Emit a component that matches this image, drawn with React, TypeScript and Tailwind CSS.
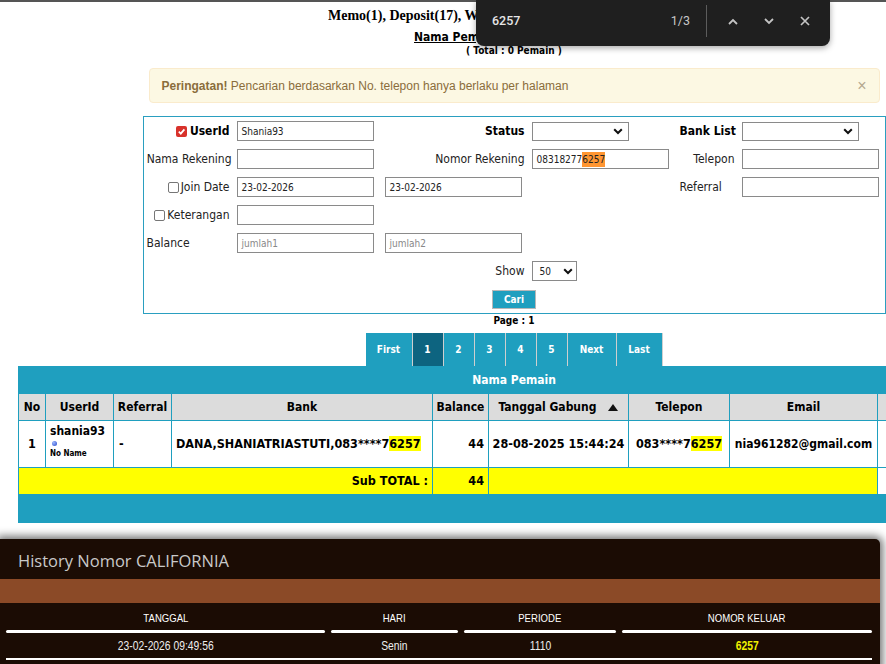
import React from "react";

const ui = "font-['Tahoma','DejaVu_Sans_Condensed','DejaVu_Sans',sans-serif]";
const narrow = "font-['Liberation_Sans',sans-serif]";

function Check({ on }: { on?: boolean }) {
  if (on) {
    return (
      <span className="inline-flex h-[11px] w-[11px] items-center justify-center rounded-[2px] bg-[#d8322b]">
        <svg viewBox="0 0 10 10" className="h-[9px] w-[9px]">
          <path d="M2 5.2 4.2 7.4 8.2 2.6" fill="none" stroke="#fff" strokeWidth="1.9" />
        </svg>
      </span>
    );
  }
  return <span className="inline-block h-[11px] w-[11px] rounded-[2px] border border-[#767676] bg-white" />;
}

function Chevron() {
  return (
    <svg viewBox="0 0 10 7" className="h-[7px] w-[10px]">
      <polyline points="1.2,1.2 5,5 8.8,1.2" fill="none" stroke="#111" strokeWidth="2" />
    </svg>
  );
}

function Field({ className, children }: { className: string; children?: React.ReactNode }) {
  return (
    <div className={"flex h-[20px] items-center border border-[#8a8a8a] bg-white px-[4px] text-[10px] text-[#222] " + className}>
      {children}
    </div>
  );
}

function Select({ className, value }: { className: string; value?: string }) {
  return (
    <div className={"flex h-[19px] items-center justify-between border border-[#8a8a8a] bg-white pl-[10px] pr-[5px] text-[10px] text-[#222] " + className}>
      <span>{value}</span>
      <Chevron />
    </div>
  );
}

const hl = "bg-[#ffff00]";

export default function App() {
  return (
    <div className={"relative h-[664px] w-[886px] overflow-hidden bg-white " + ui}>
      <div className="w-[1028px]">
        <div className="h-[2px] bg-[#555]" />
        <div className="pl-[328px] pt-[6px] font-['Liberation_Serif',serif] text-[14px] leading-[16px] font-bold text-black">
          <div className="w-[148px] overflow-hidden whitespace-nowrap">Memo(1), Deposit(17), Withdraw(4)</div>
        </div>
        <div className="mt-[6px] pl-[414px] text-[12px] leading-[14px] font-bold text-black underline">
          <div className="w-[62px] overflow-hidden whitespace-nowrap">Nama Pemain</div>
        </div>
        <div className="text-center text-[10px] leading-[13px] font-bold text-black">( Total : 0 Pemain )</div>

        <div className="mx-auto mt-[11px] flex h-[35px] w-[731px] items-center justify-between rounded-[4px] border border-[#faebcc] bg-[#fcf8e3] pl-[12px] pr-[12px] font-['Liberation_Sans',sans-serif] text-[12px] text-[#8a6d3b]">
          <span>
            <b>Peringatan!</b> Pencarian berdasarkan No. telepon hanya berlaku per halaman
          </span>
          <span className="text-[16px] leading-none text-[#b4a88f]">×</span>
        </div>

        <div className="mx-auto mt-[13px] w-[743px] border border-[#2a9fc0] text-[12px] text-[#222]">
          <div className="grid grid-cols-[89px_147px_148px_148px_62px_147px] grid-rows-[repeat(6,28px)] items-center">
            <div className="flex items-center justify-end gap-[3px] pr-[3px] font-bold text-[12px] text-black">
              <Check on />
              <span>UserId</span>
            </div>
            <div className="pl-[4px]"><Field className="w-[137px]">Shania93</Field></div>
            <div className="pr-[3px] text-right font-bold text-[12px] text-black">Status</div>
            <div className="pl-[4px]"><Select className="w-[97px]" /></div>
            <div className="pl-[4px] font-bold text-[12px] text-black">Bank List</div>
            <div className="pl-[4px]"><Select className="w-[117px]" /></div>

            <div className="pr-[1px] text-right">Nama Rekening</div>
            <div className="pl-[4px]"><Field className="w-[137px]" /></div>
            <div className="pr-[3px] text-right">Nomor Rekening</div>
            <div className="pl-[4px]">
              <Field className="w-[137px]">
                08318277<span className="bg-[#ff9632]">6257</span>
              </Field>
            </div>
            <div className="pr-[3px] text-right">Telepon</div>
            <div className="pl-[4px]"><Field className="w-[137px]" /></div>

            <div className="flex items-center justify-end gap-[2px] pr-[3px]">
              <Check />
              <span>Join Date</span>
            </div>
            <div className="pl-[4px]"><Field className="w-[137px]">23-02-2026</Field></div>
            <div className="pl-[5px]"><Field className="w-[137px]">23-02-2026</Field></div>
            <div />
            <div className="pl-[4px]">Referral</div>
            <div className="pl-[4px]"><Field className="w-[137px]" /></div>

            <div className="flex items-center justify-end gap-[2px] pr-[3px]">
              <Check />
              <span>Keterangan</span>
            </div>
            <div className="pl-[4px]"><Field className="w-[137px]" /></div>
            <div />
            <div />
            <div />
            <div />

            <div className="pl-[3px]">Balance</div>
            <div className="pl-[4px]"><Field className="w-[137px] text-[#888]">jumlah1</Field></div>
            <div className="pl-[5px]"><Field className="w-[137px] text-[#888]">jumlah2</Field></div>
            <div />
            <div />
            <div />

            <div />
            <div />
            <div className="pr-[3px] text-right">Show</div>
            <div className="pl-[4px]">
              <div className="flex h-[20px] w-[45px] items-center justify-between border border-[#8a8a8a] bg-white pl-[7px] pr-[3px] text-[10px]">
                <span>50</span>
                <Chevron />
              </div>
            </div>
            <div />
            <div />
          </div>
          <div className="flex h-[28px] items-center justify-center">
            <button className="h-[19px] w-[44px] border border-[#b8b8b8] bg-[#1f9fbf] text-[10px] font-bold text-white">
              Cari
            </button>
          </div>
        </div>

        <div className="text-center text-[10px] leading-[13px] font-bold text-black">Page : 1</div>

        <div className="mt-[6px] flex justify-center">
          <div className="flex h-[33px] text-[10px] font-bold text-white">
            <div className="flex w-[47px] items-center justify-center border-r border-[#cfcfcf] bg-[#1f9fbf]">First</div>
            <div className="flex w-[31px] items-center justify-center border-r border-[#cfcfcf] bg-[#0d6480]">1</div>
            <div className="flex w-[31px] items-center justify-center border-r border-[#cfcfcf] bg-[#1f9fbf]">2</div>
            <div className="flex w-[31px] items-center justify-center border-r border-[#cfcfcf] bg-[#1f9fbf]">3</div>
            <div className="flex w-[31px] items-center justify-center border-r border-[#cfcfcf] bg-[#1f9fbf]">4</div>
            <div className="flex w-[31px] items-center justify-center border-r border-[#cfcfcf] bg-[#1f9fbf]">5</div>
            <div className="flex w-[49px] items-center justify-center border-r border-[#cfcfcf] bg-[#1f9fbf]">Next</div>
            <div className="flex w-[46px] items-center justify-center border-r border-[#cfcfcf] bg-[#1f9fbf]">Last</div>
          </div>
        </div>

        <table className="ml-[18px] w-[992px] table-fixed border-separate border-spacing-[1px] bg-[#1f9fbf] text-[12px] font-bold text-black">
          <colgroup>
            <col className="w-[26px]" />
            <col className="w-[67px]" />
            <col className="w-[57px]" />
            <col className="w-[260px]" />
            <col className="w-[55px]" />
            <col className="w-[139px]" />
            <col className="w-[100px]" />
            <col className="w-[147px]" />
            <col className="w-[131px]" />
          </colgroup>
          <tbody>
            <tr className="h-[26px]">
              <td colSpan={9} className="p-0 text-center text-[12px] text-white">Nama Pemain</td>
            </tr>
            <tr className="h-[26px] bg-[#dcdcdc] text-center">
              <td className="p-0">No</td>
              <td className="p-0">UserId</td>
              <td className="p-0">Referral</td>
              <td className="p-0">Bank</td>
              <td className="p-0">Balance</td>
              <td className="p-0">
                <span>Tanggal Gabung</span>
                <span className="ml-[12px] inline-block align-middle">
                  <svg viewBox="0 0 10 7" className="h-[7px] w-[10px]">
                    <polygon points="0,7 5,0 10,7" fill="#111" />
                  </svg>
                </span>
              </td>
              <td className="p-0">Telepon</td>
              <td className="p-0">Email</td>
              <td className="p-0"></td>
            </tr>
            <tr className="h-[46px] bg-white text-[12.5px]">
              <td className="p-0 text-center">1</td>
              <td className="p-0 pl-[4px] align-top">
                <div className="pt-[3px] text-[12px] leading-[14px]">shania93</div>
                <div className="ml-[2px] mt-[3px] h-[5px] w-[5px] rounded-full bg-[radial-gradient(circle_at_35%_35%,#9db8ff,#2546c8)]" />
                <div className="mt-[3px] text-[8px] leading-[10px]">No Name</div>
              </td>
              <td className="p-0 pl-[5px]">-</td>
              <td className="p-0 pl-[4px]">
                DANA,SHANIATRIASTUTI,083****7<span className={hl}>6257</span>
              </td>
              <td className="p-0 pr-[4px] text-right">44</td>
              <td className="p-0 text-center">28-08-2025 15:44:24</td>
              <td className="p-0 text-center">
                083****7<span className={hl}>6257</span>
              </td>
              <td className="p-0 text-center text-[12px]">nia961282@gmail.com</td>
              <td className="p-0"></td>
            </tr>
            <tr className="h-[26px] text-[12.5px]">
              <td colSpan={4} className="bg-[#ffff00] p-0 pr-[4px] text-right">Sub TOTAL :</td>
              <td className="bg-[#ffff00] p-0 pr-[4px] text-right">44</td>
              <td colSpan={3} className="bg-[#ffff00] p-0"></td>
              <td className="bg-white p-0"></td>
            </tr>
            <tr className="h-[27px]">
              <td colSpan={9} className="p-0"></td>
            </tr>
          </tbody>
        </table>
      </div>

      <div className="mt-[16px] w-[880px] rounded-tr-[5px] bg-[#1b0c04] shadow-[0_0_9px_3px_rgba(0,0,0,0.55)]">
        <div className="pl-[18px] pt-[11px] font-['Open_Sans',sans-serif] text-[16.5px] leading-[22px] text-[#c9c9c9]">
          History Nomor CALIFORNIA
        </div>
        <div className="mt-[7px] h-[24px] bg-[#8b4a27]" />
        <div className={"grid grid-cols-[319px_127px_152px_250px] gap-x-[6px] pl-[6px] " + narrow}>
          <div className="flex h-[27px] items-end justify-center pb-[4px] text-[11px] text-white">
            <span className="inline-block scale-x-[0.87]">TANGGAL</span>
          </div>
          <div className="flex h-[27px] items-end justify-center pb-[4px] text-[11px] text-white">
            <span className="inline-block scale-x-[0.87]">HARI</span>
          </div>
          <div className="flex h-[27px] items-end justify-center pb-[4px] text-[11px] text-white">
            <span className="inline-block scale-x-[0.87]">PERIODE</span>
          </div>
          <div className="flex h-[27px] items-end justify-center pb-[4px] text-[11px] text-white">
            <span className="inline-block scale-x-[0.87]">NOMOR KELUAR</span>
          </div>
          <div className="h-[3px] rounded-full bg-white" />
          <div className="h-[3px] rounded-full bg-white" />
          <div className="h-[3px] rounded-full bg-white" />
          <div className="h-[3px] rounded-full bg-white" />
          <div className="flex h-[25px] items-center justify-center text-[12px] text-[#eee]">
            <span className="inline-block scale-x-[0.86]">23-02-2026 09:49:56</span>
          </div>
          <div className="flex h-[25px] items-center justify-center text-[12px] text-[#eee]">
            <span className="inline-block scale-x-[0.86]">Senin</span>
          </div>
          <div className="flex h-[25px] items-center justify-center text-[12px] text-[#eee]">
            <span className="inline-block scale-x-[0.86]">1110</span>
          </div>
          <div className="flex h-[25px] items-center justify-center text-[12px] font-bold text-[#f2f200]">
            <span className="inline-block scale-x-[0.86]">6257</span>
          </div>
          <div className="col-span-4 h-[2px] bg-white" />
          <div className="col-span-4 h-[10px]" />
        </div>
      </div>

      <div className="absolute left-[476px] top-0 flex h-[46px] w-[354px] items-center rounded-b-[8px] bg-[#1f1f1f] pb-[4px] font-['Roboto',sans-serif] shadow-[0_2px_6px_rgba(0,0,0,0.35)]">
        <span className="ml-[16px] text-[12.5px] font-medium text-[#e6e6e6]">6257</span>
        <span className="ml-auto text-[12.5px] text-[#c7c7c7]">1/3</span>
        <span className="ml-[16px] h-[32px] w-px bg-[#5c5c5c]" />
        <div className="ml-[21px] flex items-center gap-[26px] pr-[20px]">
          <svg viewBox="0 0 10 7" className="h-[7px] w-[10px]">
            <polyline points="1,6 5,2 9,6" fill="none" stroke="#c4c4c4" strokeWidth="1.8" />
          </svg>
          <svg viewBox="0 0 10 7" className="h-[7px] w-[10px]">
            <polyline points="1,1 5,5 9,1" fill="none" stroke="#c4c4c4" strokeWidth="1.8" />
          </svg>
          <svg viewBox="0 0 10 10" className="h-[10px] w-[10px]">
            <path d="M1 1 9 9M9 1 1 9" fill="none" stroke="#c4c4c4" strokeWidth="1.7" />
          </svg>
        </div>
      </div>
    </div>
  );
}
